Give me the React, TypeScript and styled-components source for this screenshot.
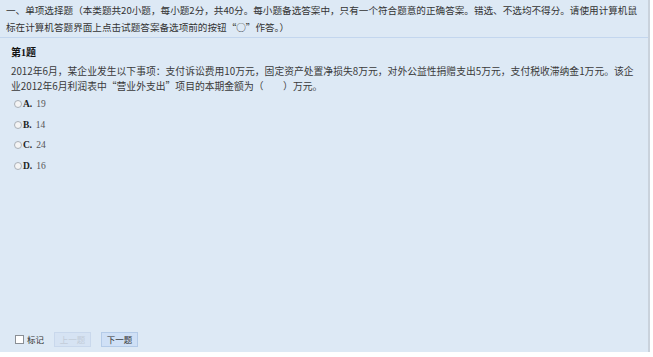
import React from "react";
import styled, { createGlobalStyle } from "styled-components";

const Global = createGlobalStyle`
  html, body { margin: 0; padding: 0; background: #ffffff; }
  body { font-family: "Noto Sans CJK SC", "Liberation Sans", sans-serif; }
`;

const Page = styled.div`
  width: 648px;
  height: 352px;
  background: #dde9f5;
  border-right: 2px solid #c9d2dc;
  display: flex;
  flex-direction: column;
  box-sizing: content-box;
`;

const Header = styled.div`
  padding: 2px 6px 0;
  height: 38px;
  box-sizing: border-box;
  border-bottom: 1px solid #c3d6ee;
  font-size: 9.6px;
  line-height: 17px;
  color: #333333;
`;

const Body = styled.div`
  padding: 7px 11px 0;
  display: flex;
  flex-direction: column;
`;

const Title = styled.div`
  font-weight: bold;
  font-size: 10px;
  line-height: 16px;
  color: #111111;
  margin-bottom: 3px;
  font-family: "Liberation Serif", "Noto Sans CJK SC", serif;
`;

const Question = styled.div`
  font-size: 9.8px;
  line-height: 15px;
  color: #3a3a3a;
  margin-bottom: 0;
`;

const Options = styled.div`
  display: flex;
  flex-direction: column;
`;

const Option = styled.label`
  display: flex;
  align-items: center;
  height: 20.6px;
  padding-left: 3px;
  font-family: "Liberation Serif", serif;
  font-size: 9.5px;
  color: #555555;
`;

const Radio = styled.span`
  width: 6px;
  height: 6px;
  border-radius: 50%;
  border: 1px solid #a9b0b8;
  background: #f4f4f4;
  margin-right: 1px;
`;

const Letter = styled.b`
  color: #222222;
  margin-right: 4px;
`;

const Footer = styled.div`
  margin-top: auto;
  display: flex;
  align-items: center;
  padding: 0 0 1px 15px;
  height: 24px;
`;

const Check = styled.span`
  width: 7px;
  height: 7px;
  border: 1px solid #8a8f95;
  background: #ffffff;
  margin-right: 3px;
`;

const MarkText = styled.span`
  font-size: 8.5px;
  color: #333333;
  margin-right: 10px;
`;

const Btn = styled.button<{ $disabled?: boolean }>`
  width: 37px;
  height: 15px;
  padding: 0;
  margin-right: 10px;
  font-family: "Noto Sans CJK SC", sans-serif;
  font-size: 8.5px;
  line-height: 13px;
  color: ${(p) => (p.$disabled ? "#c2ccd8" : "#333333")};
  background: ${(p) => (p.$disabled ? "#d6e3f3" : "#cfe0f6")};
  border: 1px solid ${(p) => (p.$disabled ? "#c9d8ec" : "#b4cbe8")};
`;

const options = [
  ["A.", "19"],
  ["B.", "14"],
  ["C.", "24"],
  ["D.", "16"],
];

export default function App() {
  return (
    <>
      <Global />
      <Page>
        <Header>
          一、单项选择题（本类题共20小题，每小题2分，共40分。每小题备选答案中，只有一个符合题意的正确答案。错选、不选均不得分。请使用计算机鼠标在计算机答题界面上点击试题答案备选项前的按钮“○”作答。）
        </Header>
        <Body>
          <Title>第1题</Title>
          <Question>
            2012年6月，某企业发生以下事项：支付诉讼费用10万元，固定资产处置净损失8万元，对外公益性捐赠支出5万元，支付税收滞纳金1万元。该企业2012年6月利润表中“营业外支出”项目的本期金额为（　　）万元。
          </Question>
          <Options>
            {options.map(([l, v]) => (
              <Option key={l}>
                <Radio />
                <Letter>{l}</Letter>
                {v}
              </Option>
            ))}
          </Options>
        </Body>
        <Footer>
          <Check />
          <MarkText>标记</MarkText>
          <Btn $disabled>上一题</Btn>
          <Btn>下一题</Btn>
        </Footer>
      </Page>
    </>
  );
}
